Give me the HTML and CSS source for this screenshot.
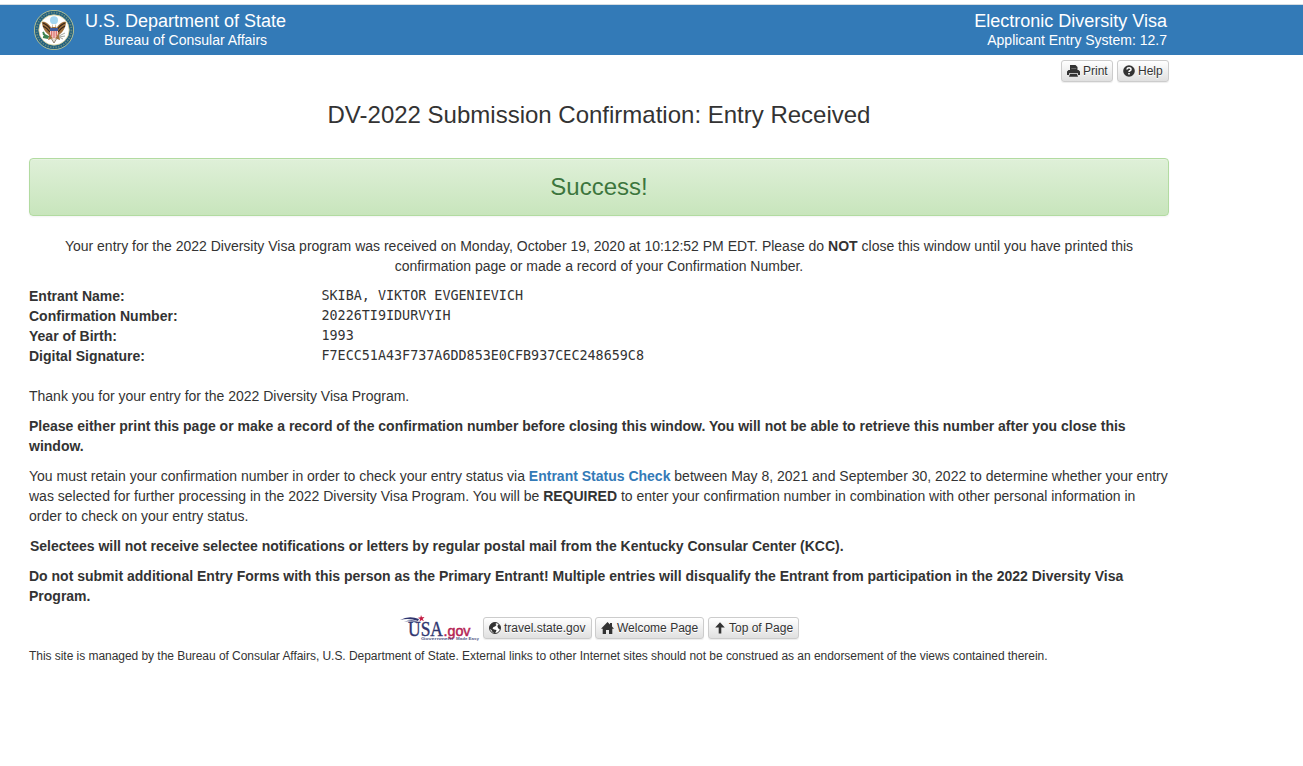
FILE: index.html
```html
<!DOCTYPE html>
<html lang="en">
<head>
<meta charset="utf-8">
<title>DV-2022 Submission Confirmation</title>
<link rel="stylesheet" href="styles.css">
</head>
<body>
<header class="banner">
  <div class="banner-inner">
    <div class="brand">
      <svg class="seal" viewBox="0 0 40 40">
        <circle cx="20" cy="20" r="19.6" fill="#1f5f80" stroke="#d3d28f" stroke-width=".8"/>
        <circle cx="20" cy="20" r="17.4" fill="none" stroke="#a9b184" stroke-width="1.800" stroke-dasharray="1.400 1.300" opacity=".5"/>
        <circle cx="20" cy="20" r="15.200" fill="#fff" stroke="#cfc98c" stroke-width=".8"/>
        <circle cx="20" cy="10.300" r="4" fill="#a4d6f1"/>
        <path d="M17.500 18C15 14 11 11 8 12C8 17 11 22 15 25L14 30L20 28L26 30L25 25C29 22 32 17 32 12C29 11 25 14 22.500 18L21.500 14.500L18.500 14.500Z" fill="#a0713d"/>
        <path d="M9 13Q14 15 17 20M9 16Q13 18 16 22M31 13Q26 15 23 20M31 16Q27 18 24 22" fill="none" stroke="#33241c" stroke-width="1.200"/>
        <path d="M18.500 14H21.500V17H18.500Z" fill="#fff"/>
        <path d="M16 20H24V24Q23 27 20 29Q17 27 16 24Z" fill="#f6cfcb"/>
        <path d="M17.700 21V26.500M20 21V28M22.300 21V26.500" stroke="#d0504d" stroke-width=".9"/>
        <path d="M16 18H24V21H16Z" fill="#3f5a9b"/>
        <path d="M15 27L9 24M14 28L9 27M12 28L9 22" stroke="#3d8350" stroke-width="1.800"/>
        <path d="M25 26L31 23M25 27L31 26M25 27L29 29" stroke="#a6aaa1" stroke-width="1"/>
        <path d="M17.500 29L20 33L22.500 29" fill="#e2ddd0" stroke="#6d5a45" stroke-width=".7"/>
      </svg>
      <div class="brand-text">
        <div class="big dept">U.S. Department of State</div>
        <div class="small bureau">Bureau of Consular Affairs</div>
      </div>
    </div>
    <div class="system">
      <div class="big visa">Electronic Diversity Visa</div>
      <div class="small version">Applicant Entry System: 12.7</div>
    </div>
  </div>
</header>
<main class="container">
  <div class="tools">
    <a class="btn tool"><svg class="icon wide" viewBox="0 0 13 12"><path d="M3 0H8.500L10.500 2V6H3Z" fill="#333"/><path d="M4.300 3.600H9.300" stroke="#999" stroke-width=".6"/><path d="M1.500 5H11.500L13 6.500V10H11V8.200H2V10H0V6.500Z" fill="#333"/><path d="M3 9H10L11 11.700H2Z" fill="#333"/></svg><span>Print</span></a>
    <a class="btn tool"><svg class="icon" viewBox="0 0 12 12"><circle cx="6" cy="6" r="5.800" fill="#333"/><path d="M3.900 4.500Q4.100 2.800 6 2.800Q8 2.800 8 4.400Q8 5.300 6.900 5.800Q6 6.200 6 7.100" fill="none" stroke="#fff" stroke-width="1.500"/><path d="M5.200 8H6.800V9.500H5.200Z" fill="#fff"/></svg><span>Help</span></a>
  </div>
  <h1 class="title">DV-2022 Submission Confirmation: Entry Received</h1>
  <div class="success">Success!</div>
  <p class="para center">Your entry for the 2022 Diversity Visa program was received on Monday, October 19, 2020 at 10:12:52 PM EDT. Please do <b>NOT</b> close this window until you have printed this<br>confirmation page or made a record of your Confirmation Number.</p>
  <dl class="details">
    <dt>Entrant Name:</dt><dd>SKIBA, VIKTOR EVGENIEVICH</dd>
    <dt>Confirmation Number:</dt><dd>20226TI9IDURVYIH</dd>
    <dt>Year of Birth:</dt><dd>1993</dd>
    <dt>Digital Signature:</dt><dd>F7ECC51A43F737A6DD853E0CFB937CEC248659C8</dd>
  </dl>
  <p class="para">Thank you for your entry for the 2022 Diversity Visa Program.</p>
  <p class="para strong">Please either print this page or make a record of the confirmation number before closing this window. You will not be able to retrieve this number after you close this<br>window.</p>
  <p class="para">You must retain your confirmation number in order to check your entry status via <a class="link">Entrant Status Check</a> between May 8, 2021 and September 30, 2022 to determine whether your entry<br>was selected for further processing in the 2022 Diversity Visa Program. You will be <b>REQUIRED</b> to enter your confirmation number in combination with other personal information in<br>order to check on your entry status.</p>
  <p class="para strong selectees">Selectees will not receive selectee notifications or letters by regular postal mail from the Kentucky Consular Center (KCC).</p>
  <p class="para strong">Do not submit additional Entry Forms with this person as the Primary Entrant! Multiple entries will disqualify the Entrant from participation in the 2022 Diversity Visa<br>Program.</p>
  <footer>
    <div class="footer-links">
      <svg class="usa" viewBox="0 0 80 26">
        <path d="M0 5Q9 0 19 4L18 6Q9 2.500 0 5Z" fill="#30366f"/>
        <path d="M4 7Q12 3 18 7L17 8.500Q11 5 4 7Z" fill="#6b719c"/>
        <path d="M21 0L22 2.200L24.500 2L22.700 4L24 6.200L21.500 5L19.500 6.700L20 4L18 2.700L20.500 2.300Z" fill="#c41f45"/>
        <text x="8" y="20.500" class="usa-name" textLength="35" lengthAdjust="spacingAndGlyphs">USA</text>
        <text x="43.500" y="20.500" class="usa-gov" textLength="27" lengthAdjust="spacingAndGlyphs">.gov</text>
        <text x="21" y="25" class="usa-tag" textLength="32" lengthAdjust="spacingAndGlyphs">Government</text>
        <text x="56" y="25" class="usa-tag" textLength="23" lengthAdjust="spacingAndGlyphs">Made Easy</text>
      </svg>
      <a class="btn travel"><svg class="icon" viewBox="0 0 12 12"><circle cx="6" cy="6" r="5.500" fill="#fff" stroke="#333"/><path d="M.5 6Q.5 2 4 .7L7.500 .5L6.500 2L7.500 3L6 4.500L4.500 5L3.500 6.500L5 7.500L7.500 8L7 9.500L6 11.500L3.500 10L2.500 8L1 7Z" fill="#333"/><path d="M9 2.500L11 3.500L11.500 6L10.500 7.500L9 6L8.500 4.500Z" fill="#333"/></svg><span>travel.state.gov</span></a>
      <a class="btn welcome"><svg class="icon wide" viewBox="0 0 13 12"><path d="M6.500 0L9 2.500V1H11V4.500L13 6.700H11.300V12H8V8H5V12H1.700V6.700H0Z" fill="#333"/></svg><span>Welcome Page</span></a>
      <a class="btn top"><svg class="icon" viewBox="0 0 12 12"><path d="M6 .3L10.800 5.500H7.300V11.500H4.700V5.500H1.200Z" fill="#333"/></svg><span>Top of Page</span></a>
    </div>
    <p class="note">This site is managed by the Bureau of Consular Affairs, U.S. Department of State. External links to other Internet sites should not be construed as an endorsement of the views contained therein.</p>
  </footer>
</main>
</body>
</html>
```
FILE: styles.css
```css
* { box-sizing: border-box; }
body { margin: 0; padding-top: 4px; background: #fff; color: #333; font: 14px/20px "Liberation Sans", Arial, sans-serif; white-space: nowrap; }
.banner { height: 51px; background: #337ab7; border-top: 1px solid #d5dce1; color: #fff; }
.banner-inner { width: 1167px; padding: 5px 0 0 34px; display: flex; justify-content: space-between; }
.brand { display: flex; gap: 11px; }
.seal { width: 40px; height: 40px; display: block; }
.brand-text { text-align: center; }
.system { text-align: right; }
.big { font-size: 18px; line-height: 22px; height: 20px; }
.small { font-size: 14px; line-height: 20px; }
.container { width: 1140px; margin-left: 29px; }
.tools { display: flex; justify-content: flex-end; gap: 4px; padding-top: 5px; }
.btn { display: flex; align-items: center; gap: 3px; height: 22px; padding: 0 5px; border: 1px solid #ccc; border-radius: 3px; background: linear-gradient(#fff, #e0e0e0); box-shadow: inset 0 1px 0 rgba(255,255,255,.15), 0 1px 1px rgba(0,0,0,.075); font-size: 12px; line-height: 18px; color: #333; text-shadow: 0 1px 0 #fff; }
.tool { width: 52px; }
.travel { width: 109px; }
.welcome { width: 109px; }
.top { width: 91px; margin-left: 1px; }
.icon { width: 12px; height: 12px; flex: none; }
.icon.wide { width: 13px; }
.title { margin: 20px 0 0; font-size: 24px; line-height: 26px; font-weight: 400; text-align: center; }
.success { margin-top: 30px; height: 58px; display: flex; align-items: center; justify-content: center; border: 1px solid #b2dba1; border-radius: 4px; background: linear-gradient(#dff0d8, #c8e5bc); color: #3c763d; font-size: 24px; box-shadow: inset 0 1px 0 rgba(255,255,255,.25), 0 1px 2px rgba(0,0,0,.05); text-shadow: 0 1px 0 rgba(255,255,255,.2); }
.para { margin: 0 0 10px; }
.center { margin-top: 20px; text-align: center; }
.strong, b { font-weight: 700; }
.link { color: #337ab7; font-weight: 700; }
.details { display: grid; grid-template-columns: 292.5px auto; grid-auto-rows: 20px; margin: 0 0 20px; }
.details dt { font-weight: 700; }
.details dd { margin: 0; font: 13.4px/20px "DejaVu Sans Mono", monospace; }
.selectees { padding-left: 1px; letter-spacing: -.008px; }
.footer-links { display: flex; padding-left: 371px; margin-top: 11px; gap: 3px; height: 24px; }
.usa { width: 80px; height: 26px; margin-top: -2px; flex: none; }
.usa-name { font: 21px "Liberation Serif", serif; fill: #30366f; stroke: #30366f; stroke-width: .4px; }
.usa-gov { font: 15px "Liberation Sans", sans-serif; fill: #b51f54; stroke: #b51f54; stroke-width: .5px; }
.usa-tag { font: 700 4.200px "Liberation Sans", sans-serif; fill: #555a88; }
.note { margin: 5px 0 0; font-size: 12px; line-height: 20px; letter-spacing: -.044px; }
```
